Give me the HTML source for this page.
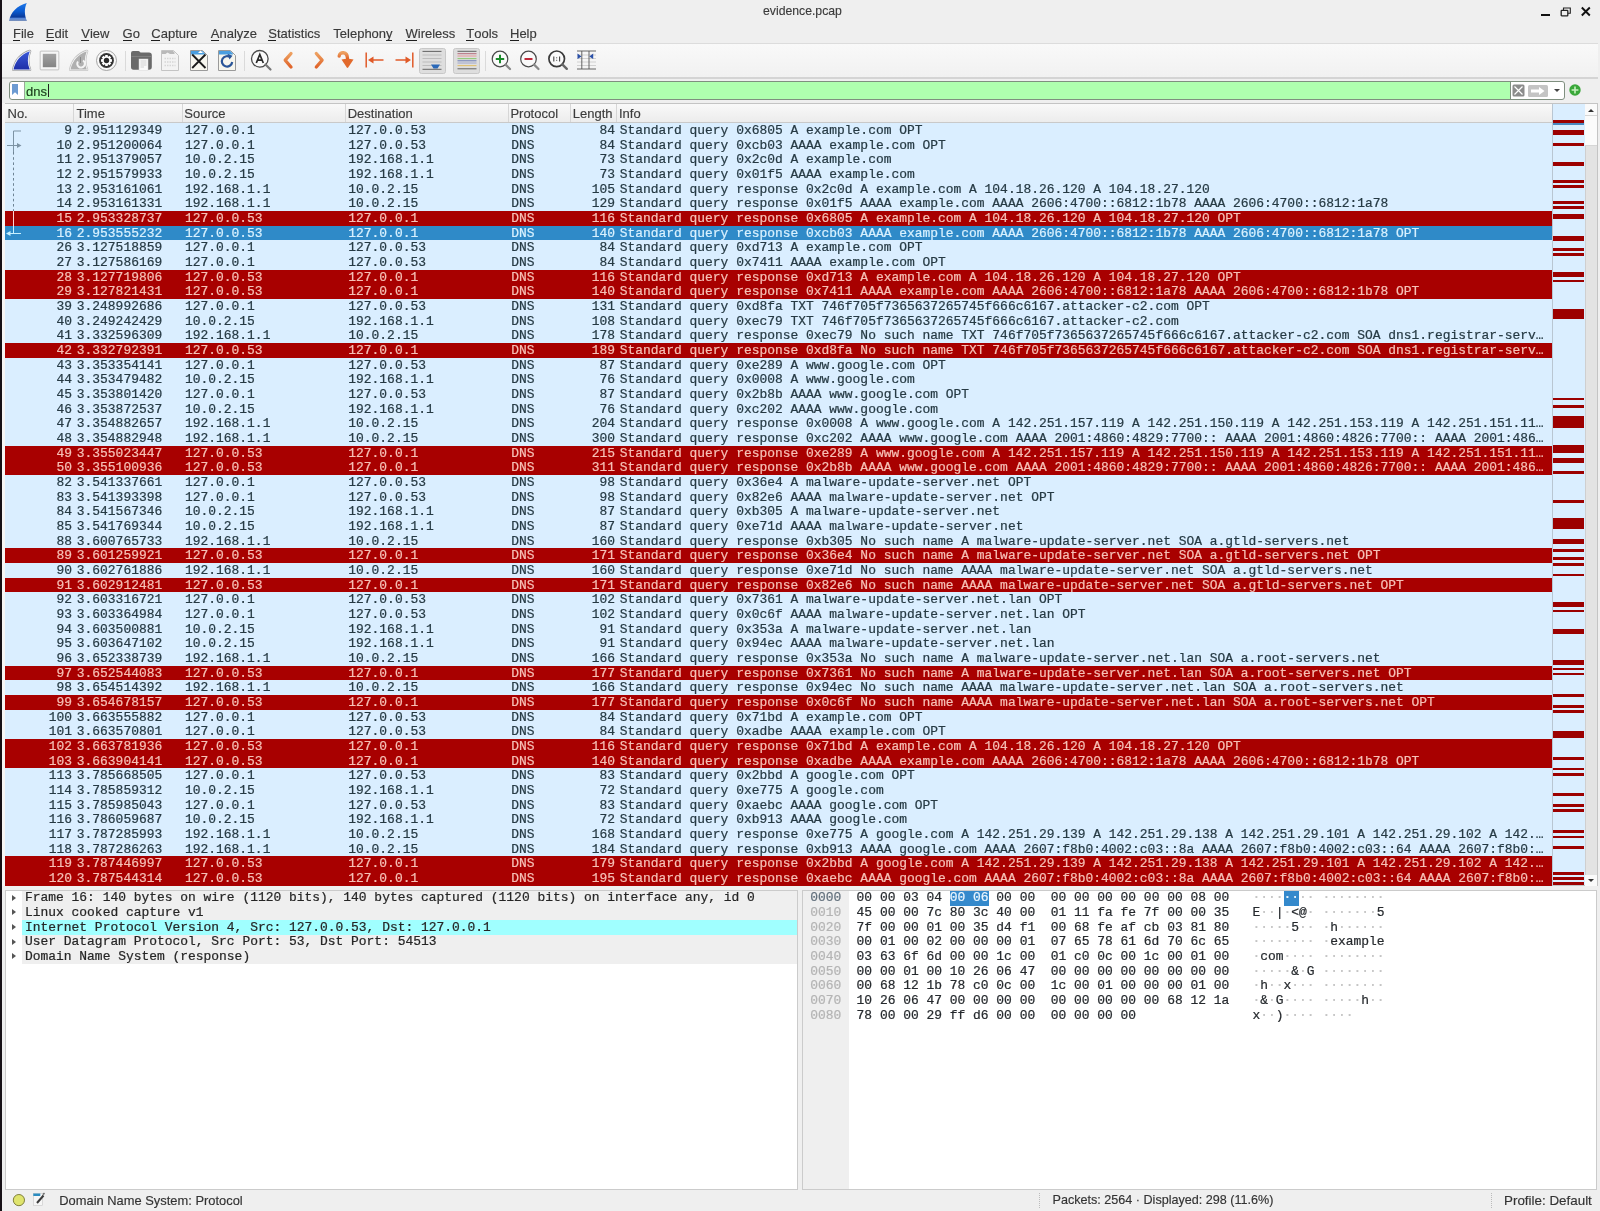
<!DOCTYPE html><html><head><meta charset="utf-8"><title>evidence.pcap</title><style>
*{margin:0;padding:0;box-sizing:border-box}
html,body{width:1600px;height:1211px;overflow:hidden;background:#efefef}
body{will-change:transform;-webkit-text-stroke:0.15px currentColor;position:relative;font-family:"Liberation Sans",sans-serif;color:#333}
.a{position:absolute}
.mono{font-family:"Liberation Mono",monospace;font-size:12.95px;white-space:pre;-webkit-text-stroke:0.22px currentColor}
.menu span{position:absolute;top:26px;font-size:13px;color:#3a3a3a;line-height:15px}
.menu u{text-decoration:none;display:inline-block;position:relative}.menu u:after{content:'';position:absolute;left:0;right:0.5px;top:13.6px;height:1.6px;background:#1e1e1e}
.hdr{position:absolute;top:104px;height:19px;background:linear-gradient(#f9f9f9,#ececec);border-bottom:1px solid #c9c9c9}
.hdr span{position:absolute;top:2px;font-size:13px;color:#3c3c3c;line-height:15px}
.sep{position:absolute;top:104px;width:1px;height:18px;background:#d6d6d6}
.row{position:absolute;left:5px;width:1547px;height:15.1px;background:#daeeff;color:#263a44;line-height:14.6667px}
.row.r{background:#a80000;color:#f7c0b6}
.row.s{background:#2f8ac8;color:#d8f1ff}
.row span{position:absolute;top:0.9px}
.c0{right:1480px;text-align:right}
.c1{left:71.8px}
.c2{left:180px}
.c3{left:343.3px}
.c4{left:506.3px}
.c5{right:937px;text-align:right}
.c6{left:614.7px}
.mm{position:absolute;left:1552.5px;width:31.8px;background:#9c0000}
.dt{position:absolute;left:22px;width:775.5px;height:14.6667px;line-height:14.6667px}
.tri{position:absolute;left:12px;width:0;height:0;border-top:3.5px solid transparent;border-bottom:3.5px solid transparent;border-left:4px solid #555}
.hx{position:absolute;line-height:14.6667px}
.dim{color:#c4c4c4}
</style></head><body>
<div class="a" style="left:0;top:0;width:2px;height:1211px;background:#161016"></div><div class="a" style="left:2px;top:103px;width:2.5px;height:783px;background:#f7f5f5"></div>
<svg class="a" style="left:8px;top:1.5px" width="21" height="21" viewBox="0 0 21 21">
<defs><linearGradient id="fin" x1="0" y1="0" x2="0" y2="1"><stop offset="0" stop-color="#1f78e8"/><stop offset="0.45" stop-color="#0a5ad0"/><stop offset="0.78" stop-color="#0a3a9a"/><stop offset="0.86" stop-color="#5a88d8"/><stop offset="1" stop-color="#7a90b8"/></linearGradient></defs>
<path d="M1 19 C2.8 10 9 3.8 18.8 1 C16.2 6.5 16.2 13 19 19 Z" fill="url(#fin)"/></svg>
<div class="a" style="left:762.5px;top:2.6px;font-size:13.6px;color:#3b3b3b;line-height:15px;transform:scaleX(0.9);transform-origin:0 0">evidence.pcap</div>
<div class="a" style="left:1541px;top:13.5px;width:9px;height:2px;background:#111"></div>
<svg class="a" style="left:1560px;top:7px" width="12" height="10" viewBox="0 0 12 10"><rect x="1.2" y="3.3" width="6.6" height="5.5" rx="0.6" fill="none" stroke="#222" stroke-width="1.3"/><path d="M3.5 3.2 V1 H10.3 V6.2 H8" fill="none" stroke="#222" stroke-width="1.1"/></svg>
<svg class="a" style="left:1580px;top:6px" width="12" height="11" viewBox="0 0 12 11"><path d="M1.8 1.5 L9.8 9.5 M9.8 1.5 L1.8 9.5" stroke="#111" stroke-width="1.9"/></svg>
<div class="menu">
<span style="left:13px"><u>F</u>ile</span>
<span style="left:45.8px"><u>E</u>dit</span>
<span style="left:81.3px"><u>V</u>iew</span>
<span style="left:122.5px"><u>G</u>o</span>
<span style="left:151.3px"><u>C</u>apture</span>
<span style="left:210.8px"><u>A</u>nalyze</span>
<span style="left:268.3px"><u>S</u>tatistics</span>
<span style="left:333.3px">Telephon<u>y</u></span>
<span style="left:405.5px"><u>W</u>ireless</span>
<span style="left:466.3px"><u>T</u>ools</span>
<span style="left:510px"><u>H</u>elp</span>
</div>
<div class="a" style="left:2px;top:43px;width:1595.5px;height:1px;background:#dcdcdc"></div>
<div class="a" style="left:2px;top:44px;width:1595.5px;height:33px;background:linear-gradient(#f9f9f9,#f1f1f1)"></div>
<div class="a" style="left:2px;top:77px;width:1595.5px;height:1.5px;background:#d4d4d4"></div>
<svg class="a" style="left:11px;top:49px" width="22" height="23" viewBox="0 0 22 23"><defs><linearGradient id="g1" x1="0" y1="0" x2="0" y2="1"><stop offset="0" stop-color="#3a58d8"/><stop offset="1" stop-color="#1e2ea8"/></linearGradient></defs><path d="M2.5 20.5 C4.5 11.5 10.5 5 18.8 2.2 C16.2 8.5 16.2 14.5 18.8 20.5 Z" fill="none" stroke="#a4a4a4" stroke-width="3" stroke-linejoin="round"/><path d="M2.5 20.5 C4.5 11.5 10.5 5 18.8 2.2 C16.2 8.5 16.2 14.5 18.8 20.5 Z" fill="none" stroke="#f4f6ff" stroke-width="1.6" stroke-linejoin="round"/><path d="M2.5 20.5 C4.5 11.5 10.5 5 18.8 2.2 C16.2 8.5 16.2 14.5 18.8 20.5 Z" fill="url(#g1)"/></svg>
<svg class="a" style="left:39px;top:50px" width="22" height="21" viewBox="0 0 22 21"><defs><linearGradient id="g2" x1="0" y1="0" x2="0" y2="1"><stop offset="0" stop-color="#a2a2a2"/><stop offset="1" stop-color="#848484"/></linearGradient></defs><rect x="1.2" y="1.2" width="18.6" height="18.6" rx="1" fill="#f6f6f6" stroke="#cdcdcd" stroke-width="1.2"/><rect x="3.8" y="3.8" width="13.4" height="13.4" fill="url(#g2)"/></svg>
<svg class="a" style="left:68px;top:49px" width="22" height="23" viewBox="0 0 22 23"><path d="M2.5 20.5 C4.5 11.5 10.5 5 18.8 2.2 C16.2 8.5 16.2 14.5 18.8 20.5 Z" fill="none" stroke="#c4c4c4" stroke-width="3" stroke-linejoin="round"/><path d="M2.5 20.5 C4.5 11.5 10.5 5 18.8 2.2 C16.2 8.5 16.2 14.5 18.8 20.5 Z" fill="none" stroke="#f8f8f8" stroke-width="1.6" stroke-linejoin="round"/><path d="M2.5 20.5 C4.5 11.5 10.5 5 18.8 2.2 C16.2 8.5 16.2 14.5 18.8 20.5 Z" fill="#b0b0b0"/><path d="M10 12.5 A3.8 3.8 0 1 0 15 11.5" fill="none" stroke="#f4f4f4" stroke-width="2"/><path d="M12.5 8 V14" stroke="#8a8a8a" stroke-width="1"/></svg>
<svg class="a" style="left:95px;top:48.5px" width="23" height="23" viewBox="0 0 23 23"><circle cx="11.5" cy="11.5" r="10" fill="#f8f8f8" stroke="#9a9a9a" stroke-width="0.9"/><circle cx="11.5" cy="11.5" r="7.4" fill="#333"/><polygon points="16.97,10.28 16.97,12.72 15.34,12.94 15.23,13.19 16.23,14.50 14.50,16.23 13.19,15.23 12.94,15.34 12.72,16.97 10.28,16.97 10.06,15.34 9.81,15.23 8.50,16.23 6.77,14.50 7.77,13.19 7.66,12.94 6.03,12.72 6.03,10.28 7.66,10.06 7.77,9.81 6.77,8.50 8.50,6.77 9.81,7.77 10.06,7.66 10.28,6.03 12.72,6.03 12.94,7.66 13.19,7.77 14.50,6.77 16.23,8.50 15.23,9.81 15.34,10.06" fill="#fff"/><circle cx="11.5" cy="11.5" r="2.7" fill="#2a2a2a"/></svg>
<div class="a" style="left:124.5px;top:51px;width:1px;height:20px;background:#dadada"></div>
<svg class="a" style="left:130px;top:50px" width="23" height="21" viewBox="0 0 23 21"><path d="M1 3 Q1 1 3 1 H8.5 Q9.5 1 10.5 2.5 H19 Q21.8 2.5 21.8 5 V17 Q21.8 19.8 19 19.8 H3.5 Q1 19.8 1 17 Z" fill="#6a6a6a"/><path d="M1.5 6.5 H21.5" stroke="#8a8a8a" stroke-width="0.7"/><rect x="9" y="9" width="9" height="11.5" fill="#fafafa" stroke="#d8d8d8" stroke-width="0.5"/><path d="M10.5 11 H16.5 M10.5 13 H16.5 M10.5 15 H16.5 M10.5 17 H14" stroke="#bbb" stroke-width="0.6"/></svg>
<svg class="a" style="left:160px;top:49px" width="20" height="23" viewBox="0 0 20 23"><path d="M1.5 1.5 H13.5 L18.5 6.5 V21.5 H1.5 Z" fill="#f3f3f3" stroke="#c4c4c4"/><path d="M2 2 H13 L14.5 3.5 V5 H10 L7.5 3.5 L5.5 5 H2 Z" fill="#b9b9b9"/><path d="M4.5 9.5 H15.5 M4.5 13 H15.5 M4.5 16.5 H15.5" stroke="#d6d6d6" stroke-width="1.4" stroke-dasharray="1.5,1"/></svg>
<svg class="a" style="left:189px;top:49px" width="20" height="23" viewBox="0 0 20 23"><path d="M1.5 1.5 H13.5 L18.5 6.5 V21.5 H1.5 Z" fill="#f7f6ee" stroke="#9a9a9a"/><path d="M2 2 H13.3 L16 4.7 V5.5 H2 Z" fill="#4a9ee0"/><path d="M9 4 L11.5 1.5 L14 4 Z" fill="#fff"/><path d="M3.2 5.5 L16.5 19 M16.5 5.5 L3.2 19" stroke="#1a1a1a" stroke-width="1.8"/></svg>
<svg class="a" style="left:217px;top:49px" width="20" height="23" viewBox="0 0 20 23"><path d="M1.5 1.5 H13.5 L18.5 6.5 V21.5 H1.5 Z" fill="#f7f6ee" stroke="#9a9a9a"/><path d="M2 2 H13.3 L16 4.7 V5.5 H2 Z" fill="#4a9ee0"/><path d="M13.5 8.5 A5.2 5.2 0 1 0 15.2 13" fill="none" stroke="#2a5598" stroke-width="2.2"/><path d="M10.5 4.8 L15.5 6.8 L12.5 10.5 Z" fill="#2a5598"/></svg>
<div class="a" style="left:244px;top:51px;width:1px;height:20px;background:#dadada"></div>
<svg class="a" style="left:250px;top:48.5px" width="23" height="23" viewBox="0 0 23 23"><circle cx="9.8" cy="9.8" r="8.3" fill="#fbfbfb" stroke="#4a4a4a" stroke-width="1.3"/><path d="M15.5 15.5 L20.5 20.5" stroke="#777" stroke-width="2.2" stroke-linecap="round"/><path d="M6.3 14 L9.8 5.5 L13.3 14 M7.5 11.2 H12.1" fill="none" stroke="#2a2a2a" stroke-width="1.7"/></svg>
<svg class="a" style="left:282px;top:50px" width="13" height="20" viewBox="0 0 13 20"><defs><linearGradient id="og" x1="0" y1="0" x2="0" y2="1"><stop offset="0" stop-color="#eda060"/><stop offset="1" stop-color="#e0642a"/></linearGradient></defs><path d="M9 3.5 L3.2 10.2 L9 17" fill="none" stroke="url(#og)" stroke-width="3.3" stroke-linecap="round" stroke-linejoin="round"/></svg>
<svg class="a" style="left:312px;top:50px" width="13" height="20" viewBox="0 0 13 20"><path d="M4.3 3.5 L10.1 10.2 L4.3 17" fill="none" stroke="url(#og)" stroke-width="3.3" stroke-linecap="round" stroke-linejoin="round"/></svg>
<svg class="a" style="left:336px;top:49px" width="20" height="22" viewBox="0 0 20 22"><path d="M3.2 7 C3.5 2.5 11.5 2 11.5 9.5" fill="none" stroke="url(#og)" stroke-width="3.4" stroke-linecap="round"/><path d="M5.5 10.5 Q11.5 9 17.5 10.5 L12.2 18.5 Q11.5 19.3 10.8 18.5 Z" fill="#e26a2c"/></svg>
<svg class="a" style="left:364px;top:50px" width="22" height="20" viewBox="0 0 22 20"><path d="M2.2 2.5 V17.5" stroke="#e05a28" stroke-width="1.5"/><path d="M6 10 H19.5" stroke="#e05a28" stroke-width="1.5"/><path d="M4 10 L9.5 6.5 V13.5 Z" fill="#e05a28"/></svg>
<svg class="a" style="left:393px;top:50px" width="22" height="20" viewBox="0 0 22 20"><path d="M19.8 2.5 V17.5" stroke="#e05a28" stroke-width="1.5"/><path d="M2.5 10 H16" stroke="#e05a28" stroke-width="1.5"/><path d="M18 10 L12.5 6.5 V13.5 Z" fill="#e05a28"/></svg>
<div class="a" style="left:418.5px;top:47.5px;width:27px;height:26px;background:#dedede;border:1px solid #c8c8c8;border-radius:2.5px"></div>
<svg class="a" style="left:421px;top:49px" width="22" height="22" viewBox="0 0 22 22"><path d="M1.5 2.4 H20.5" stroke="#555" stroke-width="0.9"/><path d="M1.5 6 H20.5 M1.5 9.5 H20.5 M1.5 13 H20.5 M1.5 16.5 H20.5" stroke="#b4b4b4" stroke-width="0.8"/><path d="M10 15.5 H19 L16.5 19.5 H12.5 Z" fill="#2a68b8"/><path d="M1.5 20.3 H20.5" stroke="#555" stroke-width="0.9"/></svg>
<div class="a" style="left:453px;top:47.5px;width:27px;height:26px;background:#dedede;border:1px solid #c8c8c8;border-radius:2.5px"></div>
<svg class="a" style="left:456px;top:49px" width="22" height="22" viewBox="0 0 22 22"><path d="M1.5 2.3 H20.5" stroke="#555" stroke-width="0.9"/><path d="M1.5 4.7 H20.5" stroke="#b06070" stroke-width="0.9"/><path d="M1.5 7 H20.5" stroke="#e89090" stroke-width="0.9"/><path d="M1.5 9.6 H20.5" stroke="#90c878" stroke-width="1.1"/><path d="M1.5 11.8 H20.5" stroke="#6070b0" stroke-width="0.9"/><path d="M1.5 14 H20.5" stroke="#9aa0c8" stroke-width="0.9"/><path d="M1.5 16.6 H20.5" stroke="#e0c070" stroke-width="1.1"/><path d="M1.5 19.8 H20.5" stroke="#555" stroke-width="0.9"/></svg>
<div class="a" style="left:485px;top:51px;width:1px;height:20px;background:#dadada"></div>
<svg class="a" style="left:490px;top:49px" width="23" height="23" viewBox="0 0 23 23"><circle cx="10" cy="10" r="7.8" fill="#fafafa" stroke="#4a4a4a" stroke-width="1.2"/><path d="M15.6 15.6 L20 20" stroke="#888" stroke-width="2.2" stroke-linecap="round"/><path d="M10 5.8 V14.2 M5.8 10 H14.2" stroke="#1a8a2a" stroke-width="2"/></svg>
<svg class="a" style="left:519px;top:49px" width="23" height="23" viewBox="0 0 23 23"><circle cx="9.5" cy="10" r="7.8" fill="#fafafa" stroke="#4a4a4a" stroke-width="1.2"/><path d="M15.1 15.6 L19.5 20" stroke="#888" stroke-width="2.2" stroke-linecap="round"/><path d="M5.5 10 H13.5" stroke="#c02a3a" stroke-width="2"/></svg>
<svg class="a" style="left:547px;top:49px" width="23" height="23" viewBox="0 0 23 23"><circle cx="9.7" cy="9.8" r="7.8" fill="#fafafa" stroke="#3a3a3a" stroke-width="1.7"/><path d="M15.3 15.4 L19.8 19.8" stroke="#666" stroke-width="2.4" stroke-linecap="round"/><path d="M6.8 7.5 V12.5 M12.6 7.5 V12.5" stroke="#444" stroke-width="1.1"/><path d="M9.7 8.3 V9.3 M9.7 10.8 V11.8" stroke="#444" stroke-width="1"/></svg>
<svg class="a" style="left:575px;top:49px" width="22" height="22" viewBox="0 0 22 22"><path d="M2 6 H21 M2 9.5 H21 M2 13 H21 M2 16.5 H21" stroke="#c8c8c8" stroke-width="0.8"/><path d="M2 2 H21 M2 20 H21" stroke="#555" stroke-width="0.9"/><path d="M6.8 2 V20 M14 2 V20" stroke="#555" stroke-width="0.9"/><path d="M2.5 4.5 L6.5 7.5 L2.5 10 Z M18.2 4.5 L14.3 7.5 L18.2 10 Z" fill="#2a50a8"/></svg>
<div class="a" style="left:8.5px;top:81.2px;width:1556px;height:18.8px;border:1px solid #7f8f7f;border-radius:3px;background:#fff"></div>
<div class="a" style="left:23.5px;top:82.2px;width:1487px;height:16.8px;background:#afffaf;border-left:1px solid #9aaa9a;border-right:1px solid #7f8f7f"></div>
<div class="a" style="left:12px;top:84px;width:6px;height:11px;background:#6c9bd2;clip-path:polygon(0 0,100% 0,100% 100%,50% 75%,0 100%)"></div>
<div class="a" style="left:26px;top:83.8px;font-size:13px;color:#1a3a1a;line-height:15px">dns</div>
<div class="a" style="left:47.5px;top:84px;width:1px;height:13px;background:#222"></div>
<svg class="a" style="left:1512px;top:84px" width="14" height="13" viewBox="0 0 14 13"><rect x="0.5" y="0.5" width="12" height="12" rx="1.5" fill="#8c8c8c"/><path d="M2.5 2.5 L10.5 10.5 M10.5 2.5 L2.5 10.5" stroke="#fff" stroke-width="1.2"/></svg>
<svg class="a" style="left:1528px;top:84.5px" width="21" height="12" viewBox="0 0 21 12"><rect x="0" y="0" width="20" height="12" rx="1.5" fill="#c4c4c4"/><path d="M3 4.5 H11 V2 L16.5 6 L11 10 V7.5 H3 Z" fill="#fff"/></svg>
<div class="a" style="left:1554px;top:88.5px;width:0;height:0;border-left:3px solid transparent;border-right:3px solid transparent;border-top:3px solid #444"></div>
<svg class="a" style="left:1569px;top:84px" width="12" height="12" viewBox="0 0 12 12"><circle cx="6" cy="6" r="5.7" fill="#3aa83a"/><path d="M6 2.6 V9.4 M2.6 6 H9.4" stroke="#c8f0c0" stroke-width="1.6"/></svg>
<div class="a" style="left:4.5px;top:103.3px;width:1593px;height:783px;border:1px solid #c4c4c4;background:#daeeff"></div>
<div class="hdr" style="left:5px;width:1547.5px"></div>
<div class="a" style="left:7.5px;top:106px;font-size:13px;color:#3c3c3c;line-height:15px">No.</div>
<div class="a" style="left:76.5px;top:106px;font-size:13px;color:#3c3c3c;line-height:15px">Time</div>
<div class="a" style="left:184.3px;top:106px;font-size:13px;color:#3c3c3c;line-height:15px">Source</div>
<div class="a" style="left:347.7px;top:106px;font-size:13px;color:#3c3c3c;line-height:15px">Destination</div>
<div class="a" style="left:510.4px;top:106px;font-size:13px;color:#3c3c3c;line-height:15px">Protocol</div>
<div class="a" style="left:572.8px;top:106px;font-size:13px;color:#3c3c3c;line-height:15px">Length</div>
<div class="a" style="left:619px;top:106px;font-size:13px;color:#3c3c3c;line-height:15px">Info</div>
<div class="sep" style="left:73.0px"></div>
<div class="sep" style="left:181.5px"></div>
<div class="sep" style="left:344.8px"></div>
<div class="sep" style="left:507.8px"></div>
<div class="sep" style="left:570.1px"></div>
<div class="sep" style="left:615.6px"></div>
<div class="row mono" style="top:123.000px"><span class="c0">9</span><span class="c1">2.951129349</span><span class="c2">127.0.0.1</span><span class="c3">127.0.0.53</span><span class="c4">DNS</span><span class="c5">84</span><span class="c6">Standard query 0x6805 A example.com OPT</span></div>
<div class="row mono" style="top:137.667px"><span class="c0">10</span><span class="c1">2.951200064</span><span class="c2">127.0.0.1</span><span class="c3">127.0.0.53</span><span class="c4">DNS</span><span class="c5">84</span><span class="c6">Standard query 0xcb03 AAAA example.com OPT</span></div>
<div class="row mono" style="top:152.333px"><span class="c0">11</span><span class="c1">2.951379057</span><span class="c2">10.0.2.15</span><span class="c3">192.168.1.1</span><span class="c4">DNS</span><span class="c5">73</span><span class="c6">Standard query 0x2c0d A example.com</span></div>
<div class="row mono" style="top:167.000px"><span class="c0">12</span><span class="c1">2.951579933</span><span class="c2">10.0.2.15</span><span class="c3">192.168.1.1</span><span class="c4">DNS</span><span class="c5">73</span><span class="c6">Standard query 0x01f5 AAAA example.com</span></div>
<div class="row mono" style="top:181.667px"><span class="c0">13</span><span class="c1">2.953161061</span><span class="c2">192.168.1.1</span><span class="c3">10.0.2.15</span><span class="c4">DNS</span><span class="c5">105</span><span class="c6">Standard query response 0x2c0d A example.com A 104.18.26.120 A 104.18.27.120</span></div>
<div class="row mono" style="top:196.334px"><span class="c0">14</span><span class="c1">2.953161331</span><span class="c2">192.168.1.1</span><span class="c3">10.0.2.15</span><span class="c4">DNS</span><span class="c5">129</span><span class="c6">Standard query response 0x01f5 AAAA example.com AAAA 2606:4700::6812:1b78 AAAA 2606:4700::6812:1a78</span></div>
<div class="row mono r" style="top:211.000px"><span class="c0">15</span><span class="c1">2.953328737</span><span class="c2">127.0.0.53</span><span class="c3">127.0.0.1</span><span class="c4">DNS</span><span class="c5">116</span><span class="c6">Standard query response 0x6805 A example.com A 104.18.26.120 A 104.18.27.120 OPT</span></div>
<div class="row mono s" style="top:225.667px"><span class="c0">16</span><span class="c1">2.953555232</span><span class="c2">127.0.0.53</span><span class="c3">127.0.0.1</span><span class="c4">DNS</span><span class="c5">140</span><span class="c6">Standard query response 0xcb03 AAAA example.com AAAA 2606:4700::6812:1b78 AAAA 2606:4700::6812:1a78 OPT</span></div>
<div class="row mono" style="top:240.334px"><span class="c0">26</span><span class="c1">3.127518859</span><span class="c2">127.0.0.1</span><span class="c3">127.0.0.53</span><span class="c4">DNS</span><span class="c5">84</span><span class="c6">Standard query 0xd713 A example.com OPT</span></div>
<div class="row mono" style="top:255.000px"><span class="c0">27</span><span class="c1">3.127586169</span><span class="c2">127.0.0.1</span><span class="c3">127.0.0.53</span><span class="c4">DNS</span><span class="c5">84</span><span class="c6">Standard query 0x7411 AAAA example.com OPT</span></div>
<div class="row mono r" style="top:269.667px"><span class="c0">28</span><span class="c1">3.127719806</span><span class="c2">127.0.0.53</span><span class="c3">127.0.0.1</span><span class="c4">DNS</span><span class="c5">116</span><span class="c6">Standard query response 0xd713 A example.com A 104.18.26.120 A 104.18.27.120 OPT</span></div>
<div class="row mono r" style="top:284.334px"><span class="c0">29</span><span class="c1">3.127821431</span><span class="c2">127.0.0.53</span><span class="c3">127.0.0.1</span><span class="c4">DNS</span><span class="c5">140</span><span class="c6">Standard query response 0x7411 AAAA example.com AAAA 2606:4700::6812:1a78 AAAA 2606:4700::6812:1b78 OPT</span></div>
<div class="row mono" style="top:299.000px"><span class="c0">39</span><span class="c1">3.248992686</span><span class="c2">127.0.0.1</span><span class="c3">127.0.0.53</span><span class="c4">DNS</span><span class="c5">131</span><span class="c6">Standard query 0xd8fa TXT 746f705f7365637265745f666c6167.attacker-c2.com OPT</span></div>
<div class="row mono" style="top:313.667px"><span class="c0">40</span><span class="c1">3.249242429</span><span class="c2">10.0.2.15</span><span class="c3">192.168.1.1</span><span class="c4">DNS</span><span class="c5">108</span><span class="c6">Standard query 0xec79 TXT 746f705f7365637265745f666c6167.attacker-c2.com</span></div>
<div class="row mono" style="top:328.334px"><span class="c0">41</span><span class="c1">3.332596309</span><span class="c2">192.168.1.1</span><span class="c3">10.0.2.15</span><span class="c4">DNS</span><span class="c5">178</span><span class="c6">Standard query response 0xec79 No such name TXT 746f705f7365637265745f666c6167.attacker-c2.com SOA dns1.registrar-serv…</span></div>
<div class="row mono r" style="top:343.000px"><span class="c0">42</span><span class="c1">3.332792391</span><span class="c2">127.0.0.53</span><span class="c3">127.0.0.1</span><span class="c4">DNS</span><span class="c5">189</span><span class="c6">Standard query response 0xd8fa No such name TXT 746f705f7365637265745f666c6167.attacker-c2.com SOA dns1.registrar-serv…</span></div>
<div class="row mono" style="top:357.667px"><span class="c0">43</span><span class="c1">3.353354141</span><span class="c2">127.0.0.1</span><span class="c3">127.0.0.53</span><span class="c4">DNS</span><span class="c5">87</span><span class="c6">Standard query 0xe289 A www.google.com OPT</span></div>
<div class="row mono" style="top:372.334px"><span class="c0">44</span><span class="c1">3.353479482</span><span class="c2">10.0.2.15</span><span class="c3">192.168.1.1</span><span class="c4">DNS</span><span class="c5">76</span><span class="c6">Standard query 0x0008 A www.google.com</span></div>
<div class="row mono" style="top:387.001px"><span class="c0">45</span><span class="c1">3.353801420</span><span class="c2">127.0.0.1</span><span class="c3">127.0.0.53</span><span class="c4">DNS</span><span class="c5">87</span><span class="c6">Standard query 0x2b8b AAAA www.google.com OPT</span></div>
<div class="row mono" style="top:401.667px"><span class="c0">46</span><span class="c1">3.353872537</span><span class="c2">10.0.2.15</span><span class="c3">192.168.1.1</span><span class="c4">DNS</span><span class="c5">76</span><span class="c6">Standard query 0xc202 AAAA www.google.com</span></div>
<div class="row mono" style="top:416.334px"><span class="c0">47</span><span class="c1">3.354882657</span><span class="c2">192.168.1.1</span><span class="c3">10.0.2.15</span><span class="c4">DNS</span><span class="c5">204</span><span class="c6">Standard query response 0x0008 A www.google.com A 142.251.157.119 A 142.251.150.119 A 142.251.153.119 A 142.251.151.11…</span></div>
<div class="row mono" style="top:431.001px"><span class="c0">48</span><span class="c1">3.354882948</span><span class="c2">192.168.1.1</span><span class="c3">10.0.2.15</span><span class="c4">DNS</span><span class="c5">300</span><span class="c6">Standard query response 0xc202 AAAA www.google.com AAAA 2001:4860:4829:7700:: AAAA 2001:4860:4826:7700:: AAAA 2001:486…</span></div>
<div class="row mono r" style="top:445.667px"><span class="c0">49</span><span class="c1">3.355023447</span><span class="c2">127.0.0.53</span><span class="c3">127.0.0.1</span><span class="c4">DNS</span><span class="c5">215</span><span class="c6">Standard query response 0xe289 A www.google.com A 142.251.157.119 A 142.251.150.119 A 142.251.153.119 A 142.251.151.11…</span></div>
<div class="row mono r" style="top:460.334px"><span class="c0">50</span><span class="c1">3.355100936</span><span class="c2">127.0.0.53</span><span class="c3">127.0.0.1</span><span class="c4">DNS</span><span class="c5">311</span><span class="c6">Standard query response 0x2b8b AAAA www.google.com AAAA 2001:4860:4829:7700:: AAAA 2001:4860:4826:7700:: AAAA 2001:486…</span></div>
<div class="row mono" style="top:475.001px"><span class="c0">82</span><span class="c1">3.541337661</span><span class="c2">127.0.0.1</span><span class="c3">127.0.0.53</span><span class="c4">DNS</span><span class="c5">98</span><span class="c6">Standard query 0x36e4 A malware-update-server.net OPT</span></div>
<div class="row mono" style="top:489.668px"><span class="c0">83</span><span class="c1">3.541393398</span><span class="c2">127.0.0.1</span><span class="c3">127.0.0.53</span><span class="c4">DNS</span><span class="c5">98</span><span class="c6">Standard query 0x82e6 AAAA malware-update-server.net OPT</span></div>
<div class="row mono" style="top:504.334px"><span class="c0">84</span><span class="c1">3.541567346</span><span class="c2">10.0.2.15</span><span class="c3">192.168.1.1</span><span class="c4">DNS</span><span class="c5">87</span><span class="c6">Standard query 0xb305 A malware-update-server.net</span></div>
<div class="row mono" style="top:519.001px"><span class="c0">85</span><span class="c1">3.541769344</span><span class="c2">10.0.2.15</span><span class="c3">192.168.1.1</span><span class="c4">DNS</span><span class="c5">87</span><span class="c6">Standard query 0xe71d AAAA malware-update-server.net</span></div>
<div class="row mono" style="top:533.668px"><span class="c0">88</span><span class="c1">3.600765733</span><span class="c2">192.168.1.1</span><span class="c3">10.0.2.15</span><span class="c4">DNS</span><span class="c5">160</span><span class="c6">Standard query response 0xb305 No such name A malware-update-server.net SOA a.gtld-servers.net</span></div>
<div class="row mono r" style="top:548.334px"><span class="c0">89</span><span class="c1">3.601259921</span><span class="c2">127.0.0.53</span><span class="c3">127.0.0.1</span><span class="c4">DNS</span><span class="c5">171</span><span class="c6">Standard query response 0x36e4 No such name A malware-update-server.net SOA a.gtld-servers.net OPT</span></div>
<div class="row mono" style="top:563.001px"><span class="c0">90</span><span class="c1">3.602761886</span><span class="c2">192.168.1.1</span><span class="c3">10.0.2.15</span><span class="c4">DNS</span><span class="c5">160</span><span class="c6">Standard query response 0xe71d No such name AAAA malware-update-server.net SOA a.gtld-servers.net</span></div>
<div class="row mono r" style="top:577.668px"><span class="c0">91</span><span class="c1">3.602912481</span><span class="c2">127.0.0.53</span><span class="c3">127.0.0.1</span><span class="c4">DNS</span><span class="c5">171</span><span class="c6">Standard query response 0x82e6 No such name AAAA malware-update-server.net SOA a.gtld-servers.net OPT</span></div>
<div class="row mono" style="top:592.334px"><span class="c0">92</span><span class="c1">3.603316721</span><span class="c2">127.0.0.1</span><span class="c3">127.0.0.53</span><span class="c4">DNS</span><span class="c5">102</span><span class="c6">Standard query 0x7361 A malware-update-server.net.lan OPT</span></div>
<div class="row mono" style="top:607.001px"><span class="c0">93</span><span class="c1">3.603364984</span><span class="c2">127.0.0.1</span><span class="c3">127.0.0.53</span><span class="c4">DNS</span><span class="c5">102</span><span class="c6">Standard query 0x0c6f AAAA malware-update-server.net.lan OPT</span></div>
<div class="row mono" style="top:621.668px"><span class="c0">94</span><span class="c1">3.603500881</span><span class="c2">10.0.2.15</span><span class="c3">192.168.1.1</span><span class="c4">DNS</span><span class="c5">91</span><span class="c6">Standard query 0x353a A malware-update-server.net.lan</span></div>
<div class="row mono" style="top:636.335px"><span class="c0">95</span><span class="c1">3.603647102</span><span class="c2">10.0.2.15</span><span class="c3">192.168.1.1</span><span class="c4">DNS</span><span class="c5">91</span><span class="c6">Standard query 0x94ec AAAA malware-update-server.net.lan</span></div>
<div class="row mono" style="top:651.001px"><span class="c0">96</span><span class="c1">3.652338739</span><span class="c2">192.168.1.1</span><span class="c3">10.0.2.15</span><span class="c4">DNS</span><span class="c5">166</span><span class="c6">Standard query response 0x353a No such name A malware-update-server.net.lan SOA a.root-servers.net</span></div>
<div class="row mono r" style="top:665.668px"><span class="c0">97</span><span class="c1">3.652544083</span><span class="c2">127.0.0.53</span><span class="c3">127.0.0.1</span><span class="c4">DNS</span><span class="c5">177</span><span class="c6">Standard query response 0x7361 No such name A malware-update-server.net.lan SOA a.root-servers.net OPT</span></div>
<div class="row mono" style="top:680.335px"><span class="c0">98</span><span class="c1">3.654514392</span><span class="c2">192.168.1.1</span><span class="c3">10.0.2.15</span><span class="c4">DNS</span><span class="c5">166</span><span class="c6">Standard query response 0x94ec No such name AAAA malware-update-server.net.lan SOA a.root-servers.net</span></div>
<div class="row mono r" style="top:695.001px"><span class="c0">99</span><span class="c1">3.654678157</span><span class="c2">127.0.0.53</span><span class="c3">127.0.0.1</span><span class="c4">DNS</span><span class="c5">177</span><span class="c6">Standard query response 0x0c6f No such name AAAA malware-update-server.net.lan SOA a.root-servers.net OPT</span></div>
<div class="row mono" style="top:709.668px"><span class="c0">100</span><span class="c1">3.663555882</span><span class="c2">127.0.0.1</span><span class="c3">127.0.0.53</span><span class="c4">DNS</span><span class="c5">84</span><span class="c6">Standard query 0x71bd A example.com OPT</span></div>
<div class="row mono" style="top:724.335px"><span class="c0">101</span><span class="c1">3.663570801</span><span class="c2">127.0.0.1</span><span class="c3">127.0.0.53</span><span class="c4">DNS</span><span class="c5">84</span><span class="c6">Standard query 0xadbe AAAA example.com OPT</span></div>
<div class="row mono r" style="top:739.001px"><span class="c0">102</span><span class="c1">3.663781936</span><span class="c2">127.0.0.53</span><span class="c3">127.0.0.1</span><span class="c4">DNS</span><span class="c5">116</span><span class="c6">Standard query response 0x71bd A example.com A 104.18.26.120 A 104.18.27.120 OPT</span></div>
<div class="row mono r" style="top:753.668px"><span class="c0">103</span><span class="c1">3.663904141</span><span class="c2">127.0.0.53</span><span class="c3">127.0.0.1</span><span class="c4">DNS</span><span class="c5">140</span><span class="c6">Standard query response 0xadbe AAAA example.com AAAA 2606:4700::6812:1a78 AAAA 2606:4700::6812:1b78 OPT</span></div>
<div class="row mono" style="top:768.335px"><span class="c0">113</span><span class="c1">3.785668505</span><span class="c2">127.0.0.1</span><span class="c3">127.0.0.53</span><span class="c4">DNS</span><span class="c5">83</span><span class="c6">Standard query 0x2bbd A google.com OPT</span></div>
<div class="row mono" style="top:783.002px"><span class="c0">114</span><span class="c1">3.785859312</span><span class="c2">10.0.2.15</span><span class="c3">192.168.1.1</span><span class="c4">DNS</span><span class="c5">72</span><span class="c6">Standard query 0xe775 A google.com</span></div>
<div class="row mono" style="top:797.668px"><span class="c0">115</span><span class="c1">3.785985043</span><span class="c2">127.0.0.1</span><span class="c3">127.0.0.53</span><span class="c4">DNS</span><span class="c5">83</span><span class="c6">Standard query 0xaebc AAAA google.com OPT</span></div>
<div class="row mono" style="top:812.335px"><span class="c0">116</span><span class="c1">3.786059687</span><span class="c2">10.0.2.15</span><span class="c3">192.168.1.1</span><span class="c4">DNS</span><span class="c5">72</span><span class="c6">Standard query 0xb913 AAAA google.com</span></div>
<div class="row mono" style="top:827.002px"><span class="c0">117</span><span class="c1">3.787285993</span><span class="c2">192.168.1.1</span><span class="c3">10.0.2.15</span><span class="c4">DNS</span><span class="c5">168</span><span class="c6">Standard query response 0xe775 A google.com A 142.251.29.139 A 142.251.29.138 A 142.251.29.101 A 142.251.29.102 A 142.…</span></div>
<div class="row mono" style="top:841.668px"><span class="c0">118</span><span class="c1">3.787286263</span><span class="c2">192.168.1.1</span><span class="c3">10.0.2.15</span><span class="c4">DNS</span><span class="c5">184</span><span class="c6">Standard query response 0xb913 AAAA google.com AAAA 2607:f8b0:4002:c03::8a AAAA 2607:f8b0:4002:c03::64 AAAA 2607:f8b0:…</span></div>
<div class="row mono r" style="top:856.335px"><span class="c0">119</span><span class="c1">3.787446997</span><span class="c2">127.0.0.53</span><span class="c3">127.0.0.1</span><span class="c4">DNS</span><span class="c5">179</span><span class="c6">Standard query response 0x2bbd A google.com A 142.251.29.139 A 142.251.29.138 A 142.251.29.101 A 142.251.29.102 A 142.…</span></div>
<div class="row mono r" style="top:871.002px"><span class="c0">120</span><span class="c1">3.787544314</span><span class="c2">127.0.0.53</span><span class="c3">127.0.0.1</span><span class="c4">DNS</span><span class="c5">195</span><span class="c6">Standard query response 0xaebc AAAA google.com AAAA 2607:f8b0:4002:c03::8a AAAA 2607:f8b0:4002:c03::64 AAAA 2607:f8b0:…</span></div>
<svg class="a" style="left:0px;top:120px" width="30" height="120" viewBox="0 0 30 120">
<path d="M13.5 32 V11 H21" fill="none" stroke="#7d93a4" stroke-width="1"/>
<path d="M7 25.5 H18" fill="none" stroke="#7d93a4" stroke-width="1"/>
<path d="M17 23 L21.5 25.5 L17 28 Z" fill="#7d93a4"/>
<path d="M13.5 32 V91" fill="none" stroke="#6d8394" stroke-width="1" stroke-dasharray="2.6,2.6"/>
<path d="M13.5 91 V113.5 H21" fill="none" stroke="#ffd4d4" stroke-width="1"/>
<path d="M13.5 105.8 V113.5 H21" fill="none" stroke="#c8f0ff" stroke-width="1"/>
<path d="M6 113.5 L10.5 111 V116 Z" fill="#c8f0ff"/>
<path d="M8 113.5 H14" fill="none" stroke="#c8f0ff" stroke-width="1"/>
</svg>
<div class="a" style="left:1552px;top:104px;width:1px;height:782px;background:#b9c6d2"></div>
<div class="mm" style="top:119.70px;height:2.90px"></div>
<div class="mm" style="top:130.00px;height:5.00px"></div>
<div class="mm" style="top:143.00px;height:3.00px"></div>
<div class="mm" style="top:161.50px;height:4.50px"></div>
<div class="mm" style="top:180.00px;height:3.00px"></div>
<div class="mm" style="top:185.40px;height:2.60px"></div>
<div class="mm" style="top:200.70px;height:2.90px"></div>
<div class="mm" style="top:206.00px;height:3.00px"></div>
<div class="mm" style="top:214.00px;height:5.00px"></div>
<div class="mm" style="top:235.60px;height:5.00px"></div>
<div class="mm" style="top:248.00px;height:3.00px"></div>
<div class="mm" style="top:253.00px;height:3.00px"></div>
<div class="mm" style="top:272.00px;height:4.70px"></div>
<div class="mm" style="top:279.50px;height:2.50px"></div>
<div class="mm" style="top:309.00px;height:9.90px"></div>
<div class="mm" style="top:397.70px;height:2.60px"></div>
<div class="mm" style="top:405.30px;height:2.90px"></div>
<div class="mm" style="top:415.80px;height:12.60px"></div>
<div class="mm" style="top:445.20px;height:7.50px"></div>
<div class="mm" style="top:458.10px;height:4.80px"></div>
<div class="mm" style="top:470.80px;height:2.80px"></div>
<div class="mm" style="top:499.80px;height:3.00px"></div>
<div class="mm" style="top:518.30px;height:10.40px"></div>
<div class="mm" style="top:539.00px;height:4.90px"></div>
<div class="mm" style="top:549.40px;height:2.60px"></div>
<div class="mm" style="top:557.00px;height:3.30px"></div>
<div class="mm" style="top:563.00px;height:2.90px"></div>
<div class="mm" style="top:573.50px;height:2.60px"></div>
<div class="mm" style="top:601.90px;height:4.90px"></div>
<div class="mm" style="top:609.80px;height:2.70px"></div>
<div class="mm" style="top:629.00px;height:5.00px"></div>
<div class="mm" style="top:659.70px;height:4.90px"></div>
<div class="mm" style="top:667.60px;height:2.70px"></div>
<div class="mm" style="top:672.60px;height:2.60px"></div>
<div class="mm" style="top:694.00px;height:3.00px"></div>
<div class="mm" style="top:704.60px;height:3.00px"></div>
<div class="mm" style="top:709.50px;height:3.00px"></div>
<div class="mm" style="top:730.70px;height:7.30px"></div>
<div class="mm" style="top:757.00px;height:3.00px"></div>
<div class="mm" style="top:767.70px;height:2.60px"></div>
<div class="mm" style="top:772.60px;height:3.00px"></div>
<div class="mm" style="top:793.40px;height:3.00px"></div>
<div class="mm" style="top:804.00px;height:2.70px"></div>
<div class="mm" style="top:809.00px;height:3.00px"></div>
<div class="mm" style="top:830.40px;height:2.60px"></div>
<div class="mm" style="top:835.70px;height:2.70px"></div>
<div class="mm" style="top:846.00px;height:3.00px"></div>
<div class="mm" style="top:872.00px;height:2.50px"></div>
<div class="mm" style="top:877.00px;height:2.50px"></div>
<div class="mm" style="top:882.00px;height:3.00px"></div>
<div class="mm" style="top:122.6px;height:2px;background:#4a88c0;box-shadow:none"></div>
<div class="a" style="left:1584.5px;top:104px;width:12.5px;height:782px;background:#e3e3e3;border-left:1px solid #cfcfcf"></div>
<div class="a" style="left:1585px;top:104px;width:12px;height:12px;background:#fafafa"></div>
<div class="a" style="left:1587.5px;top:108.5px;width:0;height:0;border-left:3.5px solid transparent;border-right:3.5px solid transparent;border-bottom:3.5px solid #333"></div>
<div class="a" style="left:1585px;top:115.4px;width:11.5px;height:31px;background:#fbfbfb;border-top:1px solid #d6d6d6;border-bottom:1px solid #d6d6d6"></div>
<div class="a" style="left:1585px;top:874.5px;width:12px;height:11.5px;background:#fafafa"></div>
<div class="a" style="left:1587.5px;top:878.5px;width:0;height:0;border-left:3.5px solid transparent;border-right:3.5px solid transparent;border-top:3.5px solid #333"></div>
<div class="a" style="left:4.5px;top:890px;width:793.5px;height:300px;border:1px solid #cbcbcb;background:#fff"></div>
<div class="a" style="left:22px;top:890.8px;width:775px;height:73.3px;background:#efefef"></div>
<div class="a" style="left:22px;top:890.800px;height:14.6667px;"></div>
<div class="a mono" style="left:25px;top:891.400px;line-height:14.6667px;color:#262626">Frame 16: 140 bytes on wire (1120 bits), 140 bytes captured (1120 bits) on interface any, id 0</div>
<div class="tri" style="top:894.800px"></div>
<div class="a" style="left:22px;top:905.467px;height:14.6667px;"></div>
<div class="a mono" style="left:25px;top:906.067px;line-height:14.6667px;color:#262626">Linux cooked capture v1</div>
<div class="tri" style="top:909.467px"></div>
<div class="a" style="left:22px;top:920.133px;width:775px;height:14.6667px;background:#a0ffff;"></div>
<div class="a mono" style="left:25px;top:920.733px;line-height:14.6667px;color:#262626">Internet Protocol Version 4, Src: 127.0.0.53, Dst: 127.0.0.1</div>
<div class="tri" style="top:924.133px"></div>
<div class="a" style="left:22px;top:934.800px;height:14.6667px;"></div>
<div class="a mono" style="left:25px;top:935.400px;line-height:14.6667px;color:#262626">User Datagram Protocol, Src Port: 53, Dst Port: 54513</div>
<div class="tri" style="top:938.800px"></div>
<div class="a" style="left:22px;top:949.467px;height:14.6667px;"></div>
<div class="a mono" style="left:25px;top:950.067px;line-height:14.6667px;color:#262626">Domain Name System (response)</div>
<div class="tri" style="top:953.467px"></div>
<div class="a" style="left:801.5px;top:890px;width:795.5px;height:300px;border:1px solid #cbcbcb;background:#fff"></div>
<div class="a" style="left:802.5px;top:890.8px;width:46.5px;height:298.5px;background:#efefef"></div>
<div class="a" style="left:950px;top:890.6px;width:38.6px;height:15px;background:#3489cc"></div>
<div class="a" style="left:1283.8px;top:890.6px;width:15.5px;height:15px;background:#3489cc"></div>
<div class="a mono hx" style="left:810.3px;top:891.400px;color:#62707c">0000</div>
<div class="a mono hx" style="left:856.6px;top:891.400px;color:#262a2e">00 00 03 04 <span style="color:#eaf6ff">00 06</span> 00 00  00 00 00 00 00 00 08 00</div>
<div class="a mono hx" style="left:1252.5px;top:891.400px;color:#262a2e"><span class="dim">·</span><span class="dim">·</span><span class="dim">·</span><span class="dim">·</span><span style="color:#eaf6ff">·</span><span style="color:#eaf6ff">·</span><span class="dim">·</span><span class="dim">·</span> <span class="dim">·</span><span class="dim">·</span><span class="dim">·</span><span class="dim">·</span><span class="dim">·</span><span class="dim">·</span><span class="dim">·</span><span class="dim">·</span></div>
<div class="a mono hx" style="left:810.3px;top:906.067px;color:#b4b4b4">0010</div>
<div class="a mono hx" style="left:856.6px;top:906.067px;color:#262a2e">45 00 00 7c 80 3c 40 00  01 11 fa fe 7f 00 00 35</div>
<div class="a mono hx" style="left:1252.5px;top:906.067px;color:#262a2e">E<span class="dim">·</span><span class="dim">·</span>|<span class="dim">·</span>&lt;@<span class="dim">·</span> <span class="dim">·</span><span class="dim">·</span><span class="dim">·</span><span class="dim">·</span><span class="dim">·</span><span class="dim">·</span><span class="dim">·</span>5</div>
<div class="a mono hx" style="left:810.3px;top:920.733px;color:#b4b4b4">0020</div>
<div class="a mono hx" style="left:856.6px;top:920.733px;color:#262a2e">7f 00 00 01 00 35 d4 f1  00 68 fe af cb 03 81 80</div>
<div class="a mono hx" style="left:1252.5px;top:920.733px;color:#262a2e"><span class="dim">·</span><span class="dim">·</span><span class="dim">·</span><span class="dim">·</span><span class="dim">·</span>5<span class="dim">·</span><span class="dim">·</span> <span class="dim">·</span>h<span class="dim">·</span><span class="dim">·</span><span class="dim">·</span><span class="dim">·</span><span class="dim">·</span><span class="dim">·</span></div>
<div class="a mono hx" style="left:810.3px;top:935.400px;color:#b4b4b4">0030</div>
<div class="a mono hx" style="left:856.6px;top:935.400px;color:#262a2e">00 01 00 02 00 00 00 01  07 65 78 61 6d 70 6c 65</div>
<div class="a mono hx" style="left:1252.5px;top:935.400px;color:#262a2e"><span class="dim">·</span><span class="dim">·</span><span class="dim">·</span><span class="dim">·</span><span class="dim">·</span><span class="dim">·</span><span class="dim">·</span><span class="dim">·</span> <span class="dim">·</span>example</div>
<div class="a mono hx" style="left:810.3px;top:950.067px;color:#b4b4b4">0040</div>
<div class="a mono hx" style="left:856.6px;top:950.067px;color:#262a2e">03 63 6f 6d 00 00 1c 00  01 c0 0c 00 1c 00 01 00</div>
<div class="a mono hx" style="left:1252.5px;top:950.067px;color:#262a2e"><span class="dim">·</span>com<span class="dim">·</span><span class="dim">·</span><span class="dim">·</span><span class="dim">·</span> <span class="dim">·</span><span class="dim">·</span><span class="dim">·</span><span class="dim">·</span><span class="dim">·</span><span class="dim">·</span><span class="dim">·</span><span class="dim">·</span></div>
<div class="a mono hx" style="left:810.3px;top:964.733px;color:#b4b4b4">0050</div>
<div class="a mono hx" style="left:856.6px;top:964.733px;color:#262a2e">00 00 01 00 10 26 06 47  00 00 00 00 00 00 00 00</div>
<div class="a mono hx" style="left:1252.5px;top:964.733px;color:#262a2e"><span class="dim">·</span><span class="dim">·</span><span class="dim">·</span><span class="dim">·</span><span class="dim">·</span>&amp;<span class="dim">·</span>G <span class="dim">·</span><span class="dim">·</span><span class="dim">·</span><span class="dim">·</span><span class="dim">·</span><span class="dim">·</span><span class="dim">·</span><span class="dim">·</span></div>
<div class="a mono hx" style="left:810.3px;top:979.400px;color:#b4b4b4">0060</div>
<div class="a mono hx" style="left:856.6px;top:979.400px;color:#262a2e">00 68 12 1b 78 c0 0c 00  1c 00 01 00 00 00 01 00</div>
<div class="a mono hx" style="left:1252.5px;top:979.400px;color:#262a2e"><span class="dim">·</span>h<span class="dim">·</span><span class="dim">·</span>x<span class="dim">·</span><span class="dim">·</span><span class="dim">·</span> <span class="dim">·</span><span class="dim">·</span><span class="dim">·</span><span class="dim">·</span><span class="dim">·</span><span class="dim">·</span><span class="dim">·</span><span class="dim">·</span></div>
<div class="a mono hx" style="left:810.3px;top:994.067px;color:#b4b4b4">0070</div>
<div class="a mono hx" style="left:856.6px;top:994.067px;color:#262a2e">10 26 06 47 00 00 00 00  00 00 00 00 00 68 12 1a</div>
<div class="a mono hx" style="left:1252.5px;top:994.067px;color:#262a2e"><span class="dim">·</span>&amp;<span class="dim">·</span>G<span class="dim">·</span><span class="dim">·</span><span class="dim">·</span><span class="dim">·</span> <span class="dim">·</span><span class="dim">·</span><span class="dim">·</span><span class="dim">·</span><span class="dim">·</span>h<span class="dim">·</span><span class="dim">·</span></div>
<div class="a mono hx" style="left:810.3px;top:1008.734px;color:#b4b4b4">0080</div>
<div class="a mono hx" style="left:856.6px;top:1008.734px;color:#262a2e">78 00 00 29 ff d6 00 00  00 00 00 00</div>
<div class="a mono hx" style="left:1252.5px;top:1008.734px;color:#262a2e">x<span class="dim">·</span><span class="dim">·</span>)<span class="dim">·</span><span class="dim">·</span><span class="dim">·</span><span class="dim">·</span> <span class="dim">·</span><span class="dim">·</span><span class="dim">·</span><span class="dim">·</span></div>
<svg class="a" style="left:12px;top:1192.5px" width="14" height="14" viewBox="0 0 14 14"><circle cx="6.9" cy="7.1" r="5.6" fill="#dfe46e" stroke="#74742c" stroke-width="0.9"/></svg>
<svg class="a" style="left:32px;top:1192px" width="14" height="15" viewBox="0 0 14 15"><rect x="1.3" y="1.5" width="9" height="12" fill="#f6f6f6" stroke="#c8c8c8" stroke-width="0.6"/><rect x="1.3" y="1.5" width="7" height="2.5" fill="#2a8cc0"/><path d="M5 11 L11.5 3.5" stroke="#3a3a3a" stroke-width="2"/><path d="M11 2.5 L12.5 1.2" stroke="#666" stroke-width="1.6"/></svg>
<div class="a" style="left:59.3px;top:1193px;font-size:12.9px;color:#333;line-height:15px">Domain Name System: Protocol</div>
<div class="a" style="left:1038.5px;top:1193px;width:1px;height:15px;border-left:1px dotted #bbb"></div>
<div class="a" style="left:1052.5px;top:1193px;font-size:12.6px;color:#333;line-height:15px">Packets: 2564 · Displayed: 298 (11.6%)</div>
<div class="a" style="left:1491px;top:1193px;width:1px;height:15px;border-left:1px dotted #bbb"></div>
<div class="a" style="left:1504px;top:1193px;font-size:13.4px;color:#333;line-height:15px">Profile: Default</div>
</body></html>
